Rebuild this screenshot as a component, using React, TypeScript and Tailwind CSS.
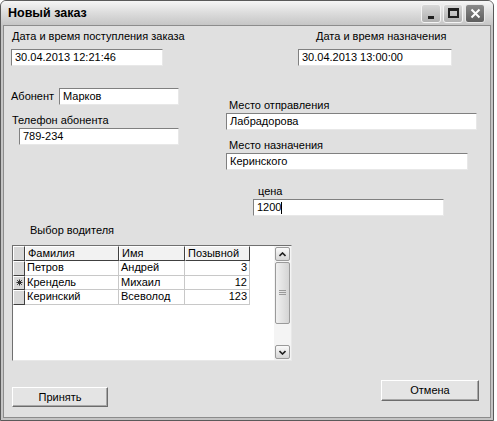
import React from "react";

const font = { fontFamily: '"Liberation Sans", Arial, sans-serif' };

const drivers = [
  { last: "Петров", first: "Андрей", call: "3", mark: false },
  { last: "Крендель", first: "Михаил", call: "12", mark: true },
  { last: "Керинский", first: "Всеволод", call: "123", mark: false },
];

function Field({ value, className = "", caret = false }: { value: string; className?: string; caret?: boolean }) {
  return (
    <div
      className={`h-[17px] bg-white border-t border-l border-t-[#808080] border-l-[#808080] border-b border-r border-b-[#e8e8e8] border-r-[#e8e8e8] flex items-center pl-[3px] text-[11px] text-black leading-none ${className}`}
    >
      {value}
      {caret && <span className="w-px h-[12px] bg-black" />}
    </div>
  );
}

function Label({ children, className = "" }: { children: React.ReactNode; className?: string }) {
  return <div className={`h-[13px] text-[11px] leading-[13px] text-black whitespace-nowrap ${className}`}>{children}</div>;
}

function WinButton({ label, className = "" }: { label: string; className?: string }) {
  return (
    <div
      className={`flex items-center justify-center bg-[#e4e4e4] border border-t-white border-l-white border-b-[#6c6c6c] border-r-[#6c6c6c] shadow-[inset_-1px_-1px_0_#a8a8a8] text-[11px] text-black ${className}`}
    >
      {label}
    </div>
  );
}

function ScrollBtn({ up }: { up: boolean }) {
  return (
    <div className="h-[14px] w-[15px] rounded-[2px] border border-[#9a9a9a] bg-gradient-to-b from-[#fafafa] to-[#d6d6d6] flex items-center justify-center">
      <svg width="7" height="5" viewBox="0 0 7 5">
        <path d={up ? "M0.5 4 L3.5 1 L6.5 4" : "M0.5 1 L3.5 4 L6.5 1"} stroke="#202020" strokeWidth="1.6" fill="none" />
      </svg>
    </div>
  );
}

function DriverGrid() {
  const sel = "w-[12px] shrink-0 bg-[#d8d8d8] border-t border-l border-t-white border-l-white border-b border-r border-b-[#404040] border-r-[#404040]";
  return (
    <div className="ml-[8px] w-[280px] h-[116px] bg-white border border-t-[#707070] border-l-[#707070] border-b-[#e8e8e8] border-r-[#e8e8e8] flex">
      <div className="flex-1 flex flex-col">
        <div className="flex h-[15px]">
          <div className={sel} />
          {[
            ["Фамилия", "w-[94px]"],
            ["Имя", "w-[66px]"],
            ["Позывной", "w-[65px]"],
          ].map(([t, w]) => (
            <div
              key={t}
              className={`${w} bg-[#f2f2f2] border-t border-l border-t-white border-l-white border-b border-r border-b-[#404040] border-r-[#404040] text-[11px] leading-[13px] pl-[2px]`}
            >
              {t}
            </div>
          ))}
        </div>
        {drivers.map((d) => (
          <div key={d.last} className="flex h-[14.5px]">
            <div className={`${sel} flex items-center justify-center`}>
              {d.mark && (
                <svg width="7" height="7" viewBox="0 0 7 7">
                  <path d="M3.5 0.5 V6.5 M0.5 3.5 H6.5 M1.2 1.2 L5.8 5.8 M5.8 1.2 L1.2 5.8" stroke="#303030" strokeWidth="1" />
                </svg>
              )}
            </div>
            <div className="w-[94px] border-r border-b border-[#c8c8c8] text-[11px] leading-[13px] pl-[2px]">{d.last}</div>
            <div className="w-[66px] border-r border-b border-[#c8c8c8] text-[11px] leading-[13px] pl-[2px]">{d.first}</div>
            <div className="w-[65px] border-r border-b border-[#c8c8c8] text-[11px] leading-[13px] pr-[2px] text-right">{d.call}</div>
          </div>
        ))}
      </div>
      <div className="w-[17px] bg-[#f4f4f4] flex flex-col items-center py-px">
        <ScrollBtn up />
        <div className="mt-[1px] h-[62px] w-[15px] rounded-[2px] border border-[#9a9a9a] bg-gradient-to-r from-[#f0f0f0] to-[#d4d4d4] flex items-center justify-center">
          <svg width="7" height="6" viewBox="0 0 7 6">
            <path d="M0 0.5 H7 M0 2.5 H7 M0 4.5 H7" stroke="#9a9a9a" strokeWidth="1" />
          </svg>
        </div>
        <div className="flex-1" />
        <ScrollBtn up={false} />
      </div>
    </div>
  );
}

export default function App() {
  return (
    <div className="w-[497px] h-[421px] bg-white" style={font}>
      <div className="w-[494px] h-[421px] rounded-t-[6px] border border-[#5a5a5a] bg-[#c4c4c4] flex flex-col overflow-hidden">
        {/* Title bar */}
        <div className="h-[24px] shrink-0 flex items-center bg-gradient-to-b from-[#f6f6f6] via-[#dcdcdc] to-[#c6c6c6] px-[7px]">
          <span className="text-[12.5px] font-bold text-black">Новый заказ</span>
          <div className="ml-auto flex gap-[2px] mr-[1px]">
            <div className="w-[20px] h-[19px] rounded-[3px] border border-[#f4f4f4] bg-gradient-to-b from-[#d8d8d8] to-[#b0b0b0] flex items-end justify-center pb-[3px]">
              <div className="w-[6px] h-[3px] bg-[#202020]" />
            </div>
            <div className="w-[20px] h-[19px] rounded-[3px] border border-[#f4f4f4] bg-gradient-to-b from-[#d8d8d8] to-[#b0b0b0] flex items-center justify-center">
              <div className="w-[11px] h-[10px] border-2 border-t-[3px] border-[#202020]" />
            </div>
            <div className="w-[20px] h-[19px] rounded-[3px] border border-[#e8e8e8] bg-gradient-to-b from-[#8a8a8a] to-[#5e5e5e] flex items-center justify-center">
              <svg width="11" height="11" viewBox="0 0 11 11">
                <path d="M1.5 1.5 L9.5 9.5 M9.5 1.5 L1.5 9.5" stroke="white" strokeWidth="2" />
              </svg>
            </div>
          </div>
        </div>

        {/* Client area */}
        <div className="flex-1 mx-[2px] mb-[2px] border border-[#8c8c8c] bg-[#e0e0e0] flex flex-col">
          {/* Dates */}
          <div className="flex pt-[4px]">
            <div className="ml-[7px] w-[152px]">
              <Label className="pl-[1px]">Дата и время поступления заказа</Label>
              <Field value="30.04.2013 12:21:46" className="mt-[6px] w-[152px]" />
            </div>
            <div className="ml-[135px]">
              <Label className="pl-[18px]">Дата и время назначения</Label>
              <Field value="30.04.2013 13:00:00" className="mt-[6px] w-[154px]" />
            </div>
          </div>

          {/* Subscriber + places */}
          <div className="flex mt-[22px]">
            <div className="ml-[7px] w-[215px]">
              <div className="flex items-center">
                <Label className="w-[48px]">Абонент</Label>
                <Field value="Марков" className="w-[120px]" />
              </div>
              <Label className="mt-[9px] pl-[1px]">Телефон абонента</Label>
              <Field value="789-234" className="mt-[1px] ml-[8px] w-[160px]" />
            </div>
            <div className="pt-[11px]">
              <Label className="pl-[3px]">Место отправления</Label>
              <Field value="Лабрадорова" className="mt-[1px] w-[251px]" />
              <Label className="mt-[9px] pl-[3px]">Место назначения</Label>
              <Field value="Керинского" className="mt-[1px] w-[242px]" />
            </div>
          </div>

          {/* Price */}
          <div className="ml-[249px] mt-[15px]">
            <Label className="pl-[5px]">цена</Label>
            <Field value="1200" caret className="mt-[1px] w-[191px]" />
          </div>

          {/* Drivers */}
          <Label className="ml-[26px] mt-[8px]">Выбор водителя</Label>
          <div className="mt-[8px]">
            <DriverGrid />
          </div>

          {/* Buttons */}
          <div className="flex items-start mt-[19px]">
            <WinButton label="Принять" className="ml-[8px] mt-[7px] w-[96px] h-[20px]" />
            <WinButton label="Отмена" className="ml-auto mr-[11px] w-[98px] h-[21px]" />
          </div>
        </div>
      </div>
    </div>
  );
}
